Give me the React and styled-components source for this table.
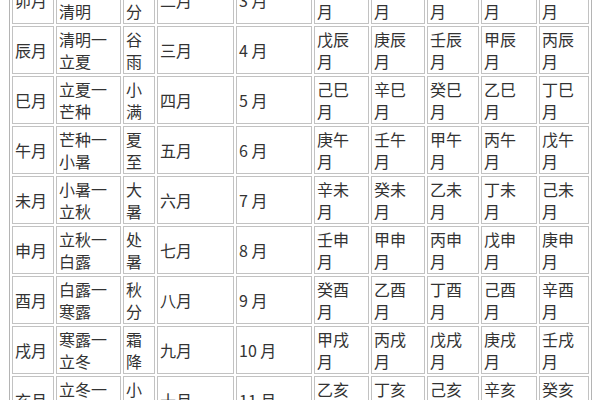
import styled, { createGlobalStyle } from "styled-components";

const GlobalStyle = createGlobalStyle`
  html, body {
    margin: 0;
    padding: 0;
    background: #ffffff;
    overflow: hidden;
  }
`;

const Page = styled.div`
  width: 600px;
  height: 400px;
  overflow: hidden;
  padding-left: 9px;
  box-sizing: border-box;
  font-family: "Noto Sans CJK SC", "Noto Sans", sans-serif;
`;

const Table = styled.table`
  border-collapse: separate;
  border-spacing: 2px;
  border: 1px solid #b4b4b4;
  table-layout: fixed;
  margin-top: -27px;
  background: #ffffff;
`;

const Col = styled.col`
  width: ${(p) => p.$w}px;
`;

const Cell = styled.td`
  box-sizing: border-box;
  height: 48px;
  border: 1px solid #c2c2c2;
  padding: 0 2px;
  font-size: 16px;
  line-height: 22px;
  color: #333333;
  vertical-align: middle;
  white-space: nowrap;
  overflow: hidden;
`;

const Line = styled.div`
  display: block;
`;

const widths = [42, 65, 32, 77, 76, 55, 54, 52, 56, 50];

const rows = [
  ["卯月", ["惊蛰一", "清明"], ["春", "分"], "二月", "3 月", "丁卯", "己卯", "辛卯", "癸卯", "乙卯"],
  ["辰月", ["清明一", "立夏"], ["谷", "雨"], "三月", "4 月", "戊辰", "庚辰", "壬辰", "甲辰", "丙辰"],
  ["巳月", ["立夏一", "芒种"], ["小", "满"], "四月", "5 月", "己巳", "辛巳", "癸巳", "乙巳", "丁巳"],
  ["午月", ["芒种一", "小暑"], ["夏", "至"], "五月", "6 月", "庚午", "壬午", "甲午", "丙午", "戊午"],
  ["未月", ["小暑一", "立秋"], ["大", "暑"], "六月", "7 月", "辛未", "癸未", "乙未", "丁未", "己未"],
  ["申月", ["立秋一", "白露"], ["处", "暑"], "七月", "8 月", "壬申", "甲申", "丙申", "戊申", "庚申"],
  ["酉月", ["白露一", "寒露"], ["秋", "分"], "八月", "9 月", "癸酉", "乙酉", "丁酉", "己酉", "辛酉"],
  ["戌月", ["寒露一", "立冬"], ["霜", "降"], "九月", "10 月", "甲戌", "丙戌", "戊戌", "庚戌", "壬戌"],
  ["亥月", ["立冬一", "小雪"], ["小", "雪"], "十月", "11 月", "乙亥", "丁亥", "己亥", "辛亥", "癸亥"],
];

function renderCell(value, i) {
  let lines;
  if (Array.isArray(value)) lines = value;
  else if (i >= 5) lines = [value, "月"];
  else lines = [value];
  return (
    <Cell key={i}>
      {lines.map((l, j) => (
        <Line key={j}>{l}</Line>
      ))}
    </Cell>
  );
}

export default function App() {
  return (
    <>
      <GlobalStyle />
      <Page>
        <Table>
          <colgroup>
            {widths.map((w, i) => (
              <Col key={i} $w={w} />
            ))}
          </colgroup>
          <tbody>
            {rows.map((row, r) => (
              <tr key={r}>{row.map((v, i) => renderCell(v, i))}</tr>
            ))}
          </tbody>
        </Table>
      </Page>
    </>
  );
}
